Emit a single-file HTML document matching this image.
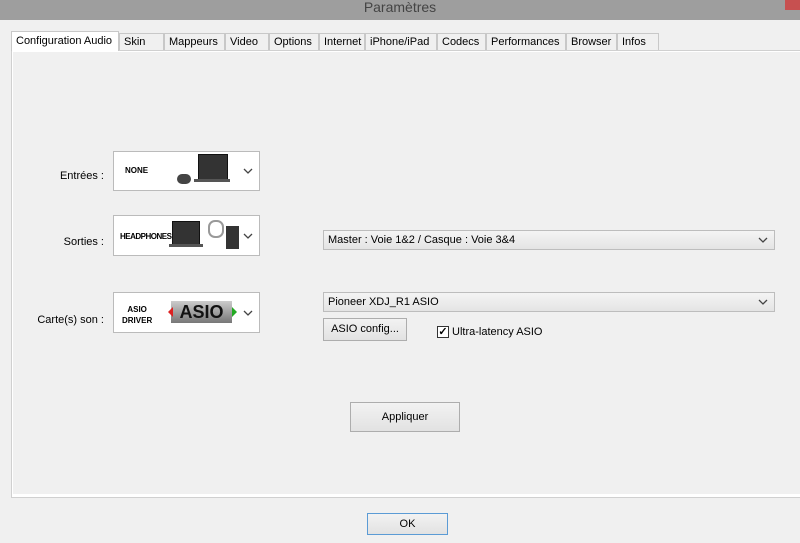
<!DOCTYPE html><html><head><style>
body{margin:0;width:800px;height:543px;background:#f0f0f0;font-family:"Liberation Sans",sans-serif;font-size:11px;color:#000;position:relative;overflow:hidden}
.a{position:absolute}
.title{left:0;top:0;width:800px;height:20px;background:#9e9e9e;text-align:center;font-size:14px;line-height:14px;color:#444}
.tab{top:33px;height:17px;border:1px solid #c8c8c8;border-bottom:none;background:#f0f0f0;line-height:17px;padding-left:4px;box-sizing:border-box}
.panel{left:11px;top:50px;width:795px;height:448px;border:1px solid #d0d0d0;box-shadow:inset 1px 1px 0 #fff,inset 0 -3px 0 #fff;box-sizing:border-box}
.dd{background:#fff;border:1px solid #bbb;box-sizing:border-box}
.chev{right:6px;top:50%;margin-top:-3px;width:10px;height:6px}
.cb{background:linear-gradient(#f4f4f4,#e4e4e4);border:1px solid #bdbdbd;box-sizing:border-box;padding-left:4px;line-height:18px}
.btn{background:linear-gradient(#f2f2f2,#e2e2e2);border:1px solid #adadad;box-sizing:border-box;text-align:center}
.lbl{text-align:right;width:100px;left:4px}
.b{font-weight:bold;font-size:8px}
</style></head><body>
<div class="a title">Paramètres</div>
<div class="a" style="left:785px;top:0;width:15px;height:10px;background:#c75050"></div>
<div class="a panel"></div>
<div class="a tab" style="left:11px;top:31px;width:108px;height:20px;background:#fff;line-height:19px">Configuration Audio</div>
<div class="a tab" style="left:119px;width:45px">Skin</div>
<div class="a tab" style="left:164px;width:61px">Mappeurs</div>
<div class="a tab" style="left:225px;width:44px">Video</div>
<div class="a tab" style="left:269px;width:50px">Options</div>
<div class="a tab" style="left:319px;width:46px">Internet</div>
<div class="a tab" style="left:365px;width:72px">iPhone/iPad</div>
<div class="a tab" style="left:437px;width:49px">Codecs</div>
<div class="a tab" style="left:486px;width:80px">Performances</div>
<div class="a tab" style="left:566px;width:51px">Browser</div>
<div class="a tab" style="left:617px;width:42px">Infos</div>

<div class="a lbl" style="top:170px">Entrées :</div>
<div class="a lbl" style="top:236px">Sorties :</div>
<div class="a lbl" style="top:314px">Carte(s) son :</div>

<div class="a dd" style="left:113px;top:151px;width:147px;height:40px">
<div class="a b" style="left:11px;top:14px">NONE</div>
<div class="a" style="left:84px;top:2px;width:28px;height:24px;background:#333;border:1px solid #111"></div>
<div class="a" style="left:80px;top:27px;width:36px;height:3px;background:#555"></div>
<div class="a" style="left:63px;top:22px;width:14px;height:10px;background:#444;border-radius:6px"></div>
<svg class="a chev" viewBox="0 0 10 6"><path d="M1 1L5 5L9 1" fill="none" stroke="#444" stroke-width="1.3"/></svg></div>

<div class="a dd" style="left:113px;top:215px;width:147px;height:41px">
<div class="a b" style="left:6px;top:16px;font-size:8px;letter-spacing:-0.5px">HEADPHONES</div>
<div class="a" style="left:58px;top:5px;width:26px;height:22px;background:#333;border:1px solid #111"></div>
<div class="a" style="left:55px;top:28px;width:34px;height:3px;background:#555"></div>
<div class="a" style="left:94px;top:4px;width:12px;height:14px;border:2px solid #999;border-radius:7px"></div>
<div class="a" style="left:112px;top:10px;width:13px;height:23px;background:#333"></div>
<svg class="a chev" viewBox="0 0 10 6"><path d="M1 1L5 5L9 1" fill="none" stroke="#444" stroke-width="1.3"/></svg></div>

<div class="a dd" style="left:113px;top:292px;width:147px;height:41px">
<div class="a b" style="left:8px;top:11px;text-align:center;line-height:11px">ASIO<br>DRIVER</div>
<div class="a" style="left:57px;top:8px;width:61px;height:22px;background:linear-gradient(#ccc,#777);font:bold 18px 'Liberation Sans';color:#111;text-align:center;line-height:22px">ASIO</div>
<div class="a" style="left:54px;top:14px;width:0;height:0;border:5px solid transparent;border-right-color:#d22;border-left:none"></div>
<div class="a" style="left:118px;top:14px;width:0;height:0;border:5px solid transparent;border-left-color:#2a2;border-right:none"></div>
<svg class="a chev" viewBox="0 0 10 6"><path d="M1 1L5 5L9 1" fill="none" stroke="#444" stroke-width="1.3"/></svg></div>

<div class="a cb" style="left:323px;top:230px;width:452px;height:20px">Master : Voie 1&amp;2 / Casque : Voie 3&amp;4<svg class="a chev" viewBox="0 0 10 6"><path d="M1 1L5 5L9 1" fill="none" stroke="#444" stroke-width="1.3"/></svg></div>
<div class="a cb" style="left:323px;top:292px;width:452px;height:20px">Pioneer XDJ_R1 ASIO<svg class="a chev" viewBox="0 0 10 6"><path d="M1 1L5 5L9 1" fill="none" stroke="#444" stroke-width="1.3"/></svg></div>
<div class="a btn" style="left:323px;top:318px;width:84px;height:23px;line-height:21px">ASIO config...</div>
<div class="a" style="left:437px;top:326px;width:12px;height:12px;background:#fff;border:1px solid #333;box-sizing:border-box;font-size:11px;line-height:10px;text-align:center;font-weight:bold">✓</div>
<div class="a" style="left:452px;top:326px">Ultra-latency ASIO</div>
<div class="a btn" style="left:350px;top:402px;width:110px;height:30px;line-height:28px">Appliquer</div>
<div class="a btn" style="left:367px;top:513px;width:81px;height:22px;line-height:20px;border-color:#5b9bd5">OK</div>
</body></html>
